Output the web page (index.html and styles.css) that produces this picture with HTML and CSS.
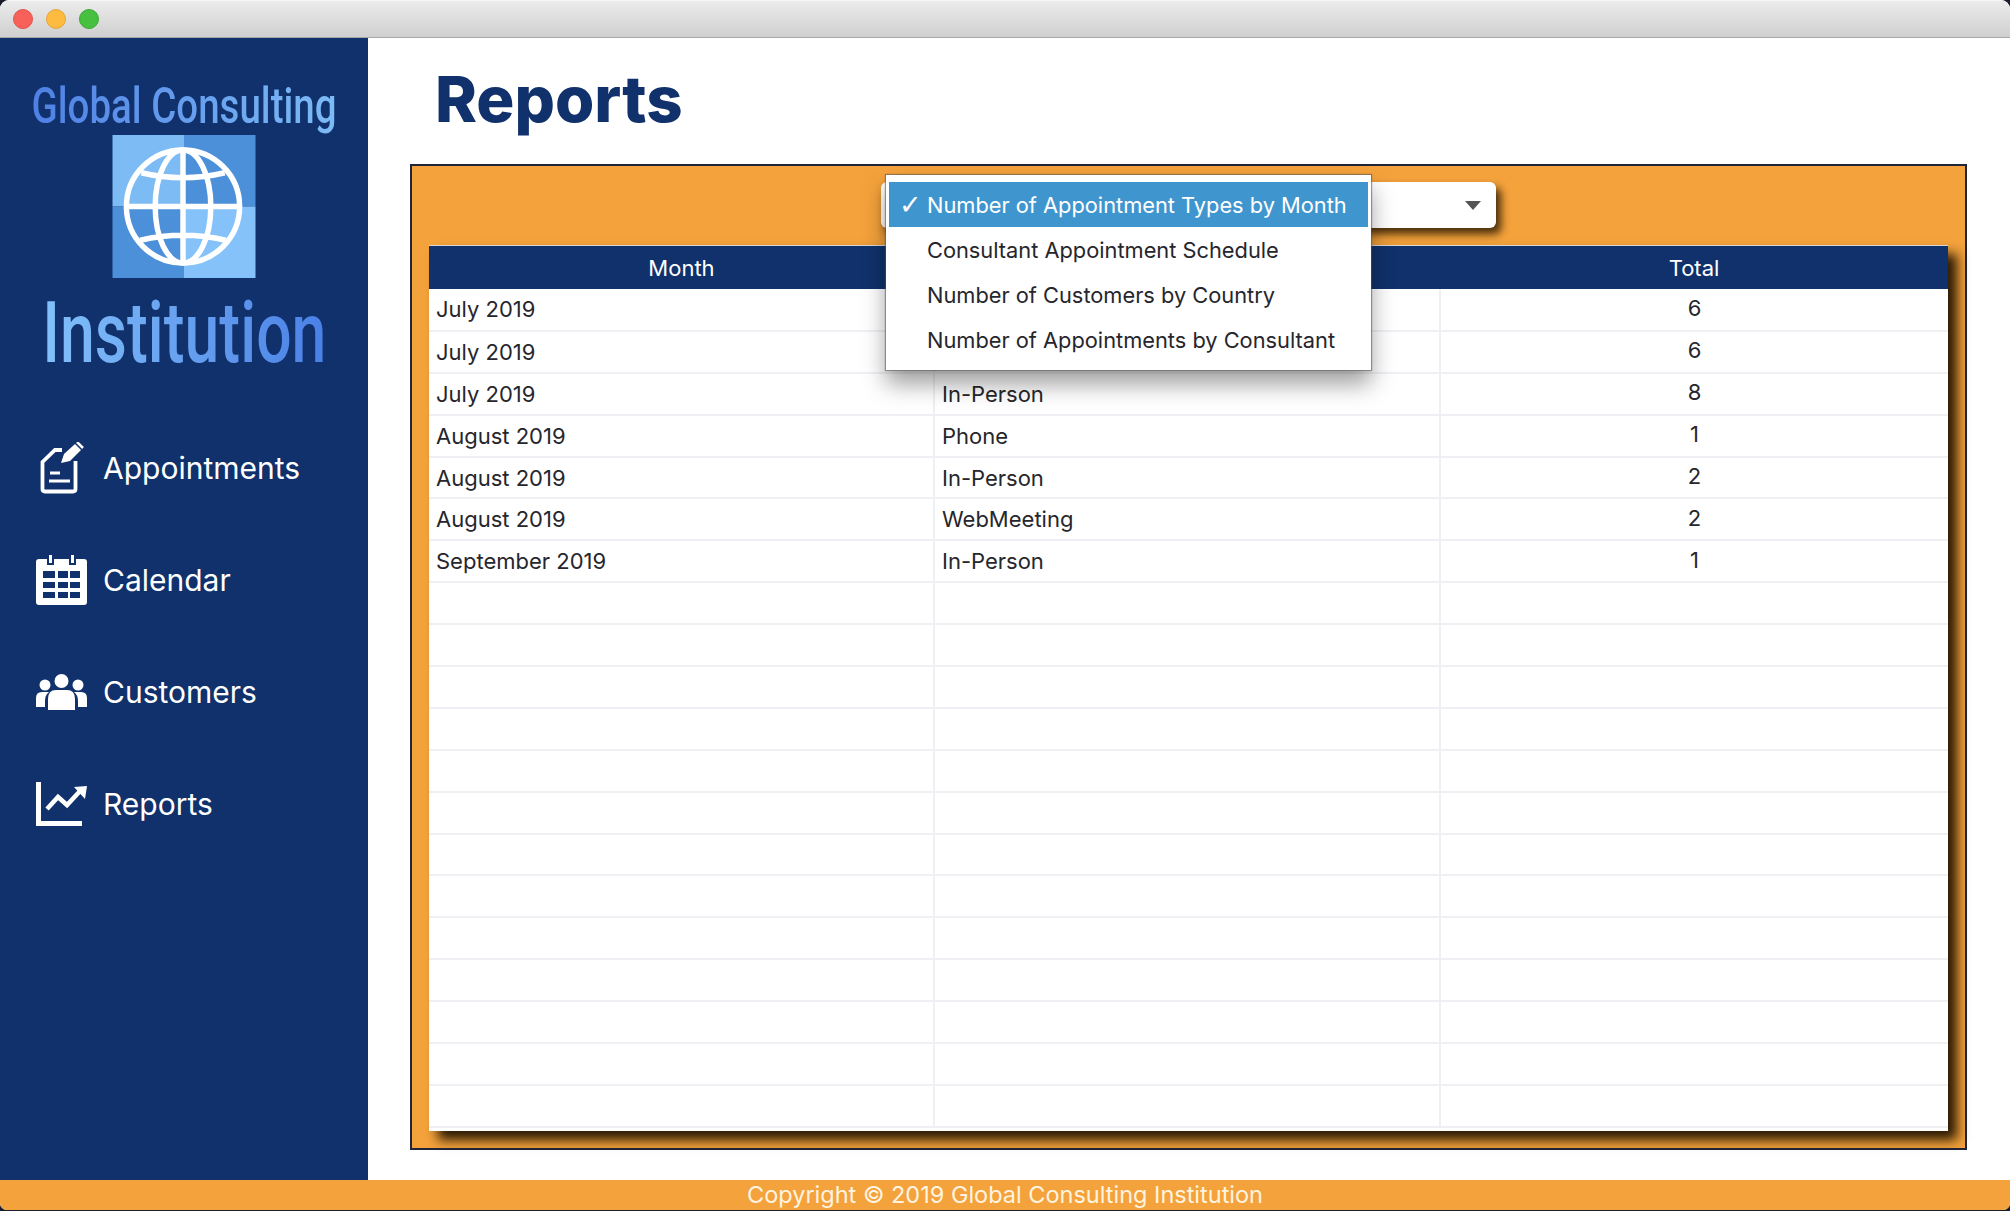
FILE: index.html
```html
<!DOCTYPE html>
<html lang="en">
<head>
<meta charset="utf-8">
<title>Reports</title>
<link rel="stylesheet" href="styles.css">
</head>
<body>
<div class="window">
  <header class="titlebar">
    <span class="light red"></span><span class="light yellow"></span><span class="light green"></span>
  </header>
  <div class="main">
    <aside class="sidebar">
      <div class="brand">
        <div class="brand-top">Global Consulting</div>
        <svg class="globe" viewBox="0 0 144 144" aria-hidden="true">
          <rect x="0" y="0" width="72" height="72" fill="#7dbbf4"/>
          <rect x="72" y="0" width="72" height="72" fill="#4b90d9"/>
          <rect x="0" y="72" width="72" height="72" fill="#4b90d9"/>
          <rect x="72" y="72" width="72" height="72" fill="#86c2fa"/>
          <g fill="none" stroke="#fff" stroke-width="5.500">
            <circle cx="71" cy="72" r="57"/>
            <ellipse cx="71" cy="72" rx="28" ry="57"/>
            <path d="M71 15V129M14 72H128M29 38Q71 48 113 38M28 106Q71 96 114 106"/>
          </g>
        </svg>
        <div class="brand-bottom">Institution</div>
      </div>
      <nav class="nav">
        <a class="nav-item">
          <span class="nav-icon">
            <svg class="ic-appt" viewBox="0 0 44 52" aria-hidden="true">
              <path d="M22 8H15L2.500 20V47Q2.500 49.500 5 49.500H33Q35.500 49.500 35.500 47V19" fill="none" stroke="#fff" stroke-width="3.800"/>
              <path d="M10 31H20M9 39H30" stroke="#fff" stroke-width="3" fill="none"/>
              <path d="M21 21L24 12L35 2L41 8L30 19Z" fill="#fff"/>
              <path d="M37 0L43 6" stroke="#fff" stroke-width="2.500"/>
            </svg>
          </span>
          <span>Appointments</span>
        </a>
        <a class="nav-item">
          <span class="nav-icon">
            <svg class="ic-cal" viewBox="0 0 51 51" aria-hidden="true">
              <path d="M3 4H11V10H18V4H33V10H40V4H48Q51 4 51 7V47Q51 50 48 50H3Q0 50 0 47V7Q0 4 3 4Z" fill="#fff"/>
              <path d="M13 0H16V8H13ZM35 0H38V8H35Z" fill="#fff"/>
              <path d="M7 16H19V23H7ZM22 16H32V23H22ZM34 16H44V23H34ZM7 27H19V33H7ZM22 27H32V33H22ZM34 27H44V33H34ZM7 37H19V43H7ZM22 37H32V43H22ZM34 37H44V43H34Z" fill="#10316b"/>
            </svg>
          </span>
          <span>Calendar</span>
        </a>
        <a class="nav-item">
          <span class="nav-icon">
            <svg class="ic-cust" viewBox="0 0 51 37" aria-hidden="true">
              <circle cx="25.500" cy="7" r="7" fill="#fff"/>
              <circle cx="9" cy="11" r="5.500" fill="#fff"/>
              <circle cx="42" cy="11" r="5.500" fill="#fff"/>
              <path d="M12 36V25Q12 16 20 16H31Q39 16 39 25V36Z" fill="#fff"/>
              <path d="M0 33V24Q0 18 6 18H13Q9 21 9 27V33ZM51 33V24Q51 18 45 18H38Q42 21 42 27V33Z" fill="#fff"/>
            </svg>
          </span>
          <span>Customers</span>
        </a>
        <a class="nav-item">
          <span class="nav-icon">
            <svg class="ic-rep" viewBox="0 0 51 44" aria-hidden="true">
              <path d="M2.500 0V41.500H46" fill="none" stroke="#fff" stroke-width="5"/>
              <path d="M11 27L22 15L31 23L45 8" fill="none" stroke="#fff" stroke-width="4.500"/>
              <path d="M38 5L51 4L49 17Z" fill="#fff"/>
            </svg>
          </span>
          <span>Reports</span>
        </a>
      </nav>
    </aside>
    <main class="content">
      <h1 class="page-title">Reports</h1>
      <section class="panel">
        <div class="combo-row">
          <div class="combo"><span class="caret"></span></div>
          <ul class="menu">
            <li class="menu-item selected"><span class="check">✓</span>Number of Appointment Types by Month</li>
            <li class="menu-item">Consultant Appointment Schedule</li>
            <li class="menu-item">Number of Customers by Country</li>
            <li class="menu-item">Number of Appointments by Consultant</li>
          </ul>
        </div>
        <div class="table-wrap">
          <table class="report">
            <thead>
              <tr><th>Month</th><th></th><th>Total</th></tr>
            </thead>
            <tbody>
              <tr><td>July 2019</td><td></td><td class="num">6</td></tr>
              <tr><td>July 2019</td><td></td><td class="num">6</td></tr>
              <tr><td>July 2019</td><td>In-Person</td><td class="num">8</td></tr>
              <tr><td>August 2019</td><td>Phone</td><td class="num">1</td></tr>
              <tr><td>August 2019</td><td>In-Person</td><td class="num">2</td></tr>
              <tr><td>August 2019</td><td>WebMeeting</td><td class="num">2</td></tr>
              <tr><td>September 2019</td><td>In-Person</td><td class="num">1</td></tr>
              <tr><td></td><td></td><td></td></tr>
              <tr><td></td><td></td><td></td></tr>
              <tr><td></td><td></td><td></td></tr>
              <tr><td></td><td></td><td></td></tr>
              <tr><td></td><td></td><td></td></tr>
              <tr><td></td><td></td><td></td></tr>
              <tr><td></td><td></td><td></td></tr>
              <tr><td></td><td></td><td></td></tr>
              <tr><td></td><td></td><td></td></tr>
              <tr><td></td><td></td><td></td></tr>
              <tr><td></td><td></td><td></td></tr>
              <tr><td></td><td></td><td></td></tr>
              <tr><td></td><td></td><td></td></tr>
            </tbody>
          </table>
        </div>
      </section>
    </main>
  </div>
  <footer class="footer">Copyright © 2019 Global Consulting Institution</footer>
</div>
</body>
</html>
```

FILE: styles.css
```css
* { box-sizing: border-box; }
html, body { margin: 0; height: 100%; background: #1a1d2a; }
body { font-family: Inter, "Liberation Sans", sans-serif; color: #26262c; }

.window {
  width: 2010px;
  height: 1210px;
  display: flex;
  flex-direction: column;
  background: #fff;
  border-radius: 9px 9px 7px 7px;
  overflow: hidden;
}

.titlebar {
  height: 38px;
  flex: none;
  display: flex;
  align-items: center;
  gap: 13px;
  padding: 0 13px;
  background: linear-gradient(#ececec, #cfcfcf);
  border-top: 1px solid #f6f6f6;
  border-bottom: 1px solid #a8a8a8;
}
.light { width: 20px; height: 20px; border-radius: 50%; }
.red { background: #f8605a; border: 1px solid #e0524b; }
.yellow { background: #fdbc40; border: 1px solid #e2a63a; }
.green { background: #46c03e; border: 1px solid #3ba934; }

.main { flex: 1; display: flex; min-height: 0; }

.sidebar {
  width: 368px;
  flex: none;
  background: #10316b;
  color: #fff;
  display: flex;
  flex-direction: column;
}

.brand {
  display: flex;
  flex-direction: column;
  align-items: center;
  padding-top: 39px;
}
.brand-top, .brand-bottom {
  font-family: Roboto, "Liberation Sans", sans-serif;
  font-weight: 500;
  background-clip: text;
  -webkit-background-clip: text;
  color: transparent;
  white-space: nowrap;
}
.brand-top {
  font-size: 50px;
  line-height: 58px;
  background-image: linear-gradient(90deg, #4f80e4, #7dbbf6);
  transform: scaleX(.77);
}
.brand-bottom {
  font-size: 86px;
  line-height: 88px;
  margin-top: 11px;
  background-image: linear-gradient(90deg, #82c0f9, #4a80e6);
  transform: scaleX(.727);
}
.globe { width: 144px; height: 143px; display: block; flex: none; margin-left: -1px; }

.nav {
  display: flex;
  flex-direction: column;
  gap: 60px;
  padding: 65px 0 0 36px;
}
.nav-item {
  display: flex;
  align-items: center;
  gap: 16px;
  height: 52px;
  font-size: 30px;
  color: #fff;
}
.nav-icon {
  width: 51px;
  flex: none;
  display: flex;
  justify-content: center;
}
.ic-appt { width: 44px; height: 52px; }
.ic-cal { width: 51px; height: 51px; }
.ic-cust { width: 51px; height: 37px; }
.ic-rep { width: 51px; height: 44px; }

.content {
  flex: 1;
  min-width: 0;
  padding: 0 43px 30px 42px;
  display: flex;
  flex-direction: column;
}
.page-title {
  margin: 0 0 0 25px;
  height: 126px;
  font-size: 63.500px;
  line-height: 122px;
  font-weight: 800;
  color: #10316b;
}

.panel {
  flex: 1;
  display: flex;
  flex-direction: column;
  background: #f4a23b;
  border: 2px solid #20253a;
  padding: 0 17px 17px 17px;
}

.combo-row {
  height: 79px;
  flex: none;
  position: relative;
  display: flex;
  justify-content: center;
  padding: 16px 0 0 0;
}
.combo {
  width: 615px;
  height: 46px;
  background: #fff;
  border-radius: 6px;
  box-shadow: 5px 6px 9px rgba(40, 25, 0, .85);
  display: flex;
  align-items: center;
  justify-content: flex-end;
  padding-right: 15px;
}
.caret {
  width: 0;
  height: 0;
  border-left: 8px solid transparent;
  border-right: 8px solid transparent;
  border-top: 9px solid #555;
}

.menu {
  position: absolute;
  left: 457px;
  top: 9px;
  width: 485px;
  height: 195px;
  margin: 0;
  padding: 7px 3px 0;
  list-style: none;
  background: #fff;
  box-shadow: 0 0 1px 1px rgba(80, 80, 80, .55), 0 14px 22px rgba(0, 0, 0, .38);
  z-index: 2;
}
.menu-item {
  height: 45px;
  padding-left: 38px;
  display: flex;
  align-items: center;
  font-size: 21.800px;
  color: #26262c;
  position: relative;
  white-space: nowrap;
}
.menu-item.selected {
  background: #3f96cf;
  color: #fff;
}
.check {
  position: absolute;
  left: 10px;
  font-size: 27px;
  font-family: "DejaVu Sans", sans-serif;
}

.table-wrap {
  flex: 1;
  background: #fff;
  box-shadow: 9px 9px 11px rgba(30, 18, 0, .95);
  border-top: 1px solid #d8d8d8;
  min-height: 0;
}
.report {
  width: 100%;
  border-collapse: collapse;
  table-layout: fixed;
  font-size: 22px;
}
.report th:nth-child(1) { width: 505px; }
.report th:nth-child(2) { width: 506px; }
.report th {
  height: 43px;
  background: #10316b;
  color: #fff;
  font-weight: 400;
  text-align: center;
  padding: 0;
}
.report td {
  height: 41.900px;
  padding: 0 7px;
  border-bottom: 2px solid #eef0f3;
  border-right: 2px solid #eef0f3;
  color: #26262c;
}
.report td:last-child { border-right: none; }
.report .num { text-align: center; padding-bottom: 3px; }

.footer {
  height: 30px;
  flex: none;
  background: #f4a23b;
  color: #fff4e0;
  font-size: 23.500px;
  line-height: 30px;
  text-align: center;
}
```
